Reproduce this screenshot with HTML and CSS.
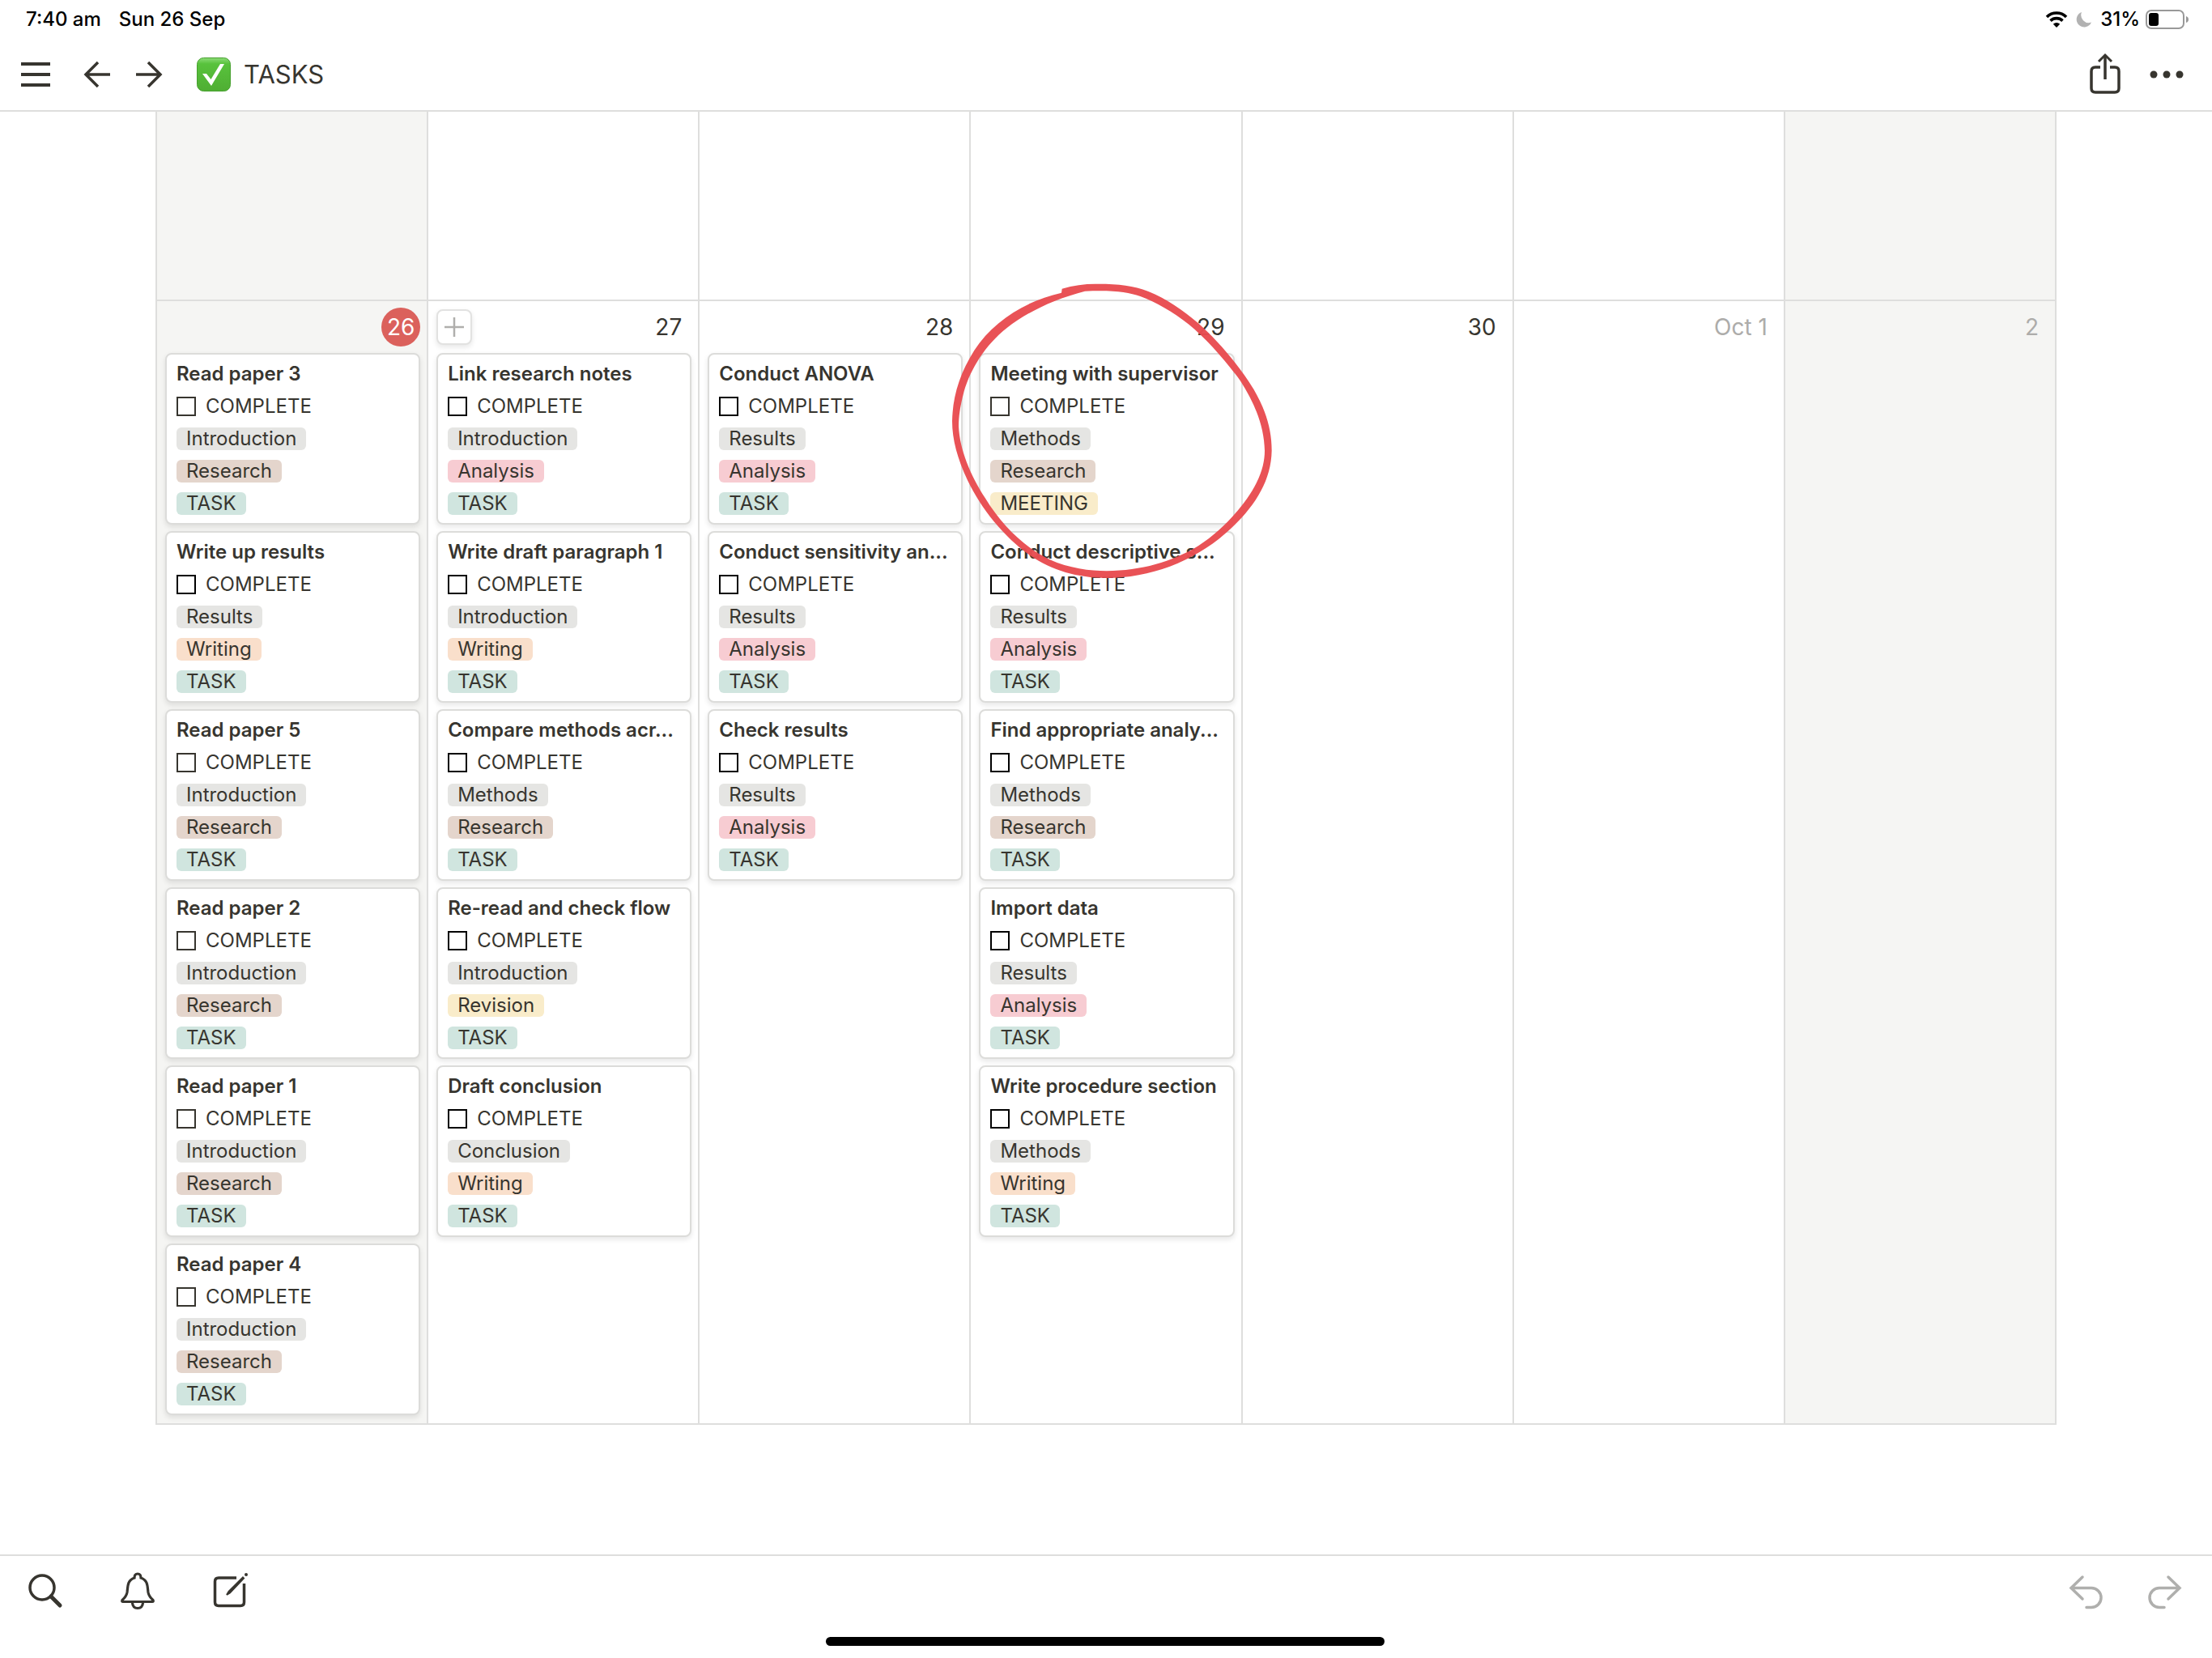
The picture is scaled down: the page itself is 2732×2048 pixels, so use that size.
FILE: index.html
```html
<!DOCTYPE html>
<html lang="en">
<head>
<meta charset="utf-8">
<title>Tasks</title>
<link rel="stylesheet" href="styles.css">
</head>
<body>
<div class="status">
  <span>7:40 am</span>
  <span>Sun 26 Sep</span>
  <div class="status-right">
    <svg width="28" height="20" viewBox="0 0 28 20"><path d="M2 7A17 17 0 0 1 26 7" fill="none" stroke="#000" stroke-width="3.6"/><path d="M6.5 11.6A11 11 0 0 1 21.500 11.600" fill="none" stroke="#000" stroke-width="3.600"/><path d="M14 20 9.800 15.800A6 6 0 0 1 18.200 15.800Z"/></svg>
    <svg class="moon" width="20" height="20" viewBox="0 0 20 20"><path d="M7 1A9.500 9.500 0 1 0 19 13.500 9.500 9.500 0 0 1 7 1Z" fill="#b2b2b2"/></svg>
    <span>31%</span>
    <svg class="battery" width="54" height="24" viewBox="0 0 54 24"><rect x="1" y="1" width="46" height="22" rx="6" fill="none" stroke="#999" stroke-width="2"/><rect x="4" y="4" width="12" height="16" rx="3"/><path d="M50 8Q53 9 53 12T50 16Z" fill="#999"/></svg>
  </div>
</div>
<header class="topbar">
  <button class="icon-btn menu" aria-label="Menu"><svg width="36" height="32" viewBox="0 0 36 32"><path d="M0 3H36M0 16H36M0 29H36" stroke-width="4"/></svg></button>
  <button class="icon-btn back" aria-label="Back"><svg width="32" height="32" viewBox="0 0 32 32"><path d="M32 16H2M17 1 2 16 17 31" stroke-width="3.500"/></svg></button>
  <button class="icon-btn forward" aria-label="Forward"><svg width="32" height="32" viewBox="0 0 32 32"><path d="M0 16H30M15 1 30 16 15 31" stroke-width="3.500"/></svg></button>
  <h1 class="page-title">
    <svg width="42" height="42" viewBox="0 0 42 42"><defs><linearGradient id="g" x1="0" y1="0" x2="0" y2="1"><stop offset="0" stop-color="#8ddc78"/><stop offset=".18" stop-color="#58c23c"/><stop offset="1" stop-color="#4fae33"/></linearGradient></defs><rect x=".5" y=".5" width="41" height="41" rx="8" fill="url(#g)" stroke="#47a02f"/><path d="M7 20H12L17.500 27 29 8H34L18 35Z" fill="#fff"/></svg>
    TASKS
  </h1>
  <button class="icon-btn share" aria-label="Share"><svg width="40" height="50" viewBox="0 0 40 50"><path d="M14 16H8Q3 16 3 21V42Q3 47 8 47H32Q37 47 37 42V21Q37 16 32 16H26M20 31V2" stroke-width="3.500"/><path d="M12 9 20 1 28 9" stroke-width="3"/></svg></button>
  <button class="icon-btn" aria-label="More"><svg width="42" height="10" viewBox="0 0 42 10"><g fill="#37352f"><circle cx="5" cy="5" r="4.500"/><circle cx="21" cy="5" r="4.500"/><circle cx="37" cy="5" r="4.500"/></g></svg></button>
</header>
<main class="content">
<div class="calendar">
  <div class="cell past weekend"></div><div class="cell past"></div><div class="cell past"></div><div class="cell past"></div><div class="cell past"></div><div class="cell past"></div><div class="cell past weekend"></div>

  <section class="cell weekend">
    <div class="day"><span class="date today">26</span></div>
    <article class="card"><h2>Read paper 3</h2><label class="check"><input type="checkbox">COMPLETE</label><p><span class="tag gray">Introduction</span></p><p><span class="tag brown">Research</span></p><p><span class="tag green">TASK</span></p></article>
    <article class="card"><h2>Write up results</h2><label class="check strong"><input type="checkbox">COMPLETE</label><p><span class="tag gray">Results</span></p><p><span class="tag orange">Writing</span></p><p><span class="tag green">TASK</span></p></article>
    <article class="card"><h2>Read paper 5</h2><label class="check"><input type="checkbox">COMPLETE</label><p><span class="tag gray">Introduction</span></p><p><span class="tag brown">Research</span></p><p><span class="tag green">TASK</span></p></article>
    <article class="card"><h2>Read paper 2</h2><label class="check"><input type="checkbox">COMPLETE</label><p><span class="tag gray">Introduction</span></p><p><span class="tag brown">Research</span></p><p><span class="tag green">TASK</span></p></article>
    <article class="card"><h2>Read paper 1</h2><label class="check"><input type="checkbox">COMPLETE</label><p><span class="tag gray">Introduction</span></p><p><span class="tag brown">Research</span></p><p><span class="tag green">TASK</span></p></article>
    <article class="card"><h2>Read paper 4</h2><label class="check"><input type="checkbox">COMPLETE</label><p><span class="tag gray">Introduction</span></p><p><span class="tag brown">Research</span></p><p><span class="tag green">TASK</span></p></article>
  </section>

  <section class="cell">
    <div class="day"><button class="add" aria-label="Add task"><svg width="24" height="24" viewBox="0 0 24 24"><path d="M0 12H24M12 0V24" stroke="#b0afad" stroke-width="2.500"/></svg></button><span class="date">27</span></div>
    <article class="card"><h2>Link research notes</h2><label class="check strong"><input type="checkbox">COMPLETE</label><p><span class="tag gray">Introduction</span></p><p><span class="tag red">Analysis</span></p><p><span class="tag green">TASK</span></p></article>
    <article class="card"><h2>Write draft paragraph 1</h2><label class="check strong"><input type="checkbox">COMPLETE</label><p><span class="tag gray">Introduction</span></p><p><span class="tag orange">Writing</span></p><p><span class="tag green">TASK</span></p></article>
    <article class="card"><h2>Compare methods acr...</h2><label class="check strong"><input type="checkbox">COMPLETE</label><p><span class="tag gray">Methods</span></p><p><span class="tag brown">Research</span></p><p><span class="tag green">TASK</span></p></article>
    <article class="card"><h2>Re-read and check flow</h2><label class="check strong"><input type="checkbox">COMPLETE</label><p><span class="tag gray">Introduction</span></p><p><span class="tag yellow">Revision</span></p><p><span class="tag green">TASK</span></p></article>
    <article class="card"><h2>Draft conclusion</h2><label class="check strong"><input type="checkbox">COMPLETE</label><p><span class="tag gray">Conclusion</span></p><p><span class="tag orange">Writing</span></p><p><span class="tag green">TASK</span></p></article>
  </section>

  <section class="cell">
    <div class="day"><span class="date">28</span></div>
    <article class="card"><h2>Conduct ANOVA</h2><label class="check strong"><input type="checkbox">COMPLETE</label><p><span class="tag gray">Results</span></p><p><span class="tag red">Analysis</span></p><p><span class="tag green">TASK</span></p></article>
    <article class="card"><h2>Conduct sensitivity an...</h2><label class="check strong"><input type="checkbox">COMPLETE</label><p><span class="tag gray">Results</span></p><p><span class="tag red">Analysis</span></p><p><span class="tag green">TASK</span></p></article>
    <article class="card"><h2>Check results</h2><label class="check strong"><input type="checkbox">COMPLETE</label><p><span class="tag gray">Results</span></p><p><span class="tag red">Analysis</span></p><p><span class="tag green">TASK</span></p></article>
  </section>

  <section class="cell">
    <div class="day"><span class="date">29</span></div>
    <article class="card"><h2>Meeting with supervisor</h2><label class="check"><input type="checkbox">COMPLETE</label><p><span class="tag gray">Methods</span></p><p><span class="tag brown">Research</span></p><p><span class="tag yellow">MEETING</span></p></article>
    <article class="card"><h2>Conduct descriptive s...</h2><label class="check strong"><input type="checkbox">COMPLETE</label><p><span class="tag gray">Results</span></p><p><span class="tag red">Analysis</span></p><p><span class="tag green">TASK</span></p></article>
    <article class="card"><h2>Find appropriate analy...</h2><label class="check strong"><input type="checkbox">COMPLETE</label><p><span class="tag gray">Methods</span></p><p><span class="tag brown">Research</span></p><p><span class="tag green">TASK</span></p></article>
    <article class="card"><h2>Import data</h2><label class="check strong"><input type="checkbox">COMPLETE</label><p><span class="tag gray">Results</span></p><p><span class="tag red">Analysis</span></p><p><span class="tag green">TASK</span></p></article>
    <article class="card"><h2>Write procedure section</h2><label class="check strong"><input type="checkbox">COMPLETE</label><p><span class="tag gray">Methods</span></p><p><span class="tag orange">Writing</span></p><p><span class="tag green">TASK</span></p></article>
    <svg class="ink" width="440" height="400" viewBox="0 0 1320 1200"><path fill="#e84c51" fill-opacity=".97" fill-rule="evenodd" d="M455 80C500 66 545 61 590 62C665 62 720 68 775 90C840 116 905 160 960 208C1030 270 1110 362 1165 452C1210 530 1232 600 1232 680C1230 800 1160 900 1060 987C940 1092 780 1152 620 1152C510 1150 420 1125 335 1067C240 1000 155 895 105 790C68 710 48 640 48 570C50 480 75 395 130 308C200 200 320 125 453 95ZM540 89C420 120 320 170 250 226C170 290 118 375 92 460C78 515 72 550 72 590C76 675 115 770 170 855C235 962 320 1040 410 1084C480 1116 560 1126 620 1126C750 1124 860 1094 960 1033C1060 968 1140 870 1175 800C1198 755 1206 715 1206 680C1204 590 1170 505 1115 420C1060 345 990 265 925 212C865 165 800 128 745 108C700 92 640 84 540 89Z"/></svg>
  </section>

  <section class="cell"><div class="day"><span class="date">30</span></div></section>
  <section class="cell"><div class="day"><span class="date muted">Oct 1</span></div></section>
  <section class="cell weekend"><div class="day"><span class="date muted">2</span></div></section>
</div>
</main>
<footer class="toolbar">
  <nav class="tools">
    <button class="icon-btn" aria-label="Search"><svg width="42" height="44" viewBox="0 0 42 44"><circle cx="17" cy="18" r="15" stroke-width="3.500"/><path d="M28 29 39 40" stroke-width="5" stroke-linecap="round"/></svg></button>
    <button class="icon-btn bell" aria-label="Notifications"><svg width="42" height="46" viewBox="0 0 42 46"><path d="M3 36.500Q1 36.500 2 34.500Q7 30 8 25C9 18 8 10 17 7Q17 2 21 2T25 7C34 10 33 18 34 25Q35 30 40 34.500Q41 36.500 39 36.500ZM14.500 38Q15 44.500 21 44.500T27.500 38" stroke-width="3.200"/></svg></button>
    <button class="icon-btn compose" aria-label="New page"><svg width="44" height="46" viewBox="0 0 44 46"><path d="M29 7H7Q2.500 7 2.500 11.500V37Q2.500 41.500 7 41.500H34Q38.500 41.500 38.500 37V14" stroke-width="3.500"/><path d="M17 28 19.500 24 37 6.500 38 7.500 21 25.500Z" fill="#37352f" stroke-width="2"/><circle cx="41" cy="3" r="2" fill="#37352f" stroke="none"/></svg></button>
  </nav>
  <nav class="history">
    <button class="icon-btn" aria-label="Undo" disabled><svg width="42" height="42" viewBox="0 0 42 42"><path d="M16 2 2 15.500 16 29M2 15.500H27A12 12 0 0 1 27 39.500H21" stroke-width="3.500" stroke-linecap="round"/></svg></button>
    <button class="icon-btn" aria-label="Redo" disabled><svg width="42" height="42" viewBox="0 0 42 42"><path d="M26 2 40 15.500 26 29M40 15.500H15A12 12 0 0 0 15 39.500H21" stroke-width="3.500" stroke-linecap="round"/></svg></button>
  </nav>
  <div class="home"></div>
</footer>
</body>
</html>
```
FILE: styles.css
```css
* { box-sizing: border-box; }

body {
  margin: 0;
  min-height: 100vh;
  display: flex;
  flex-direction: column;
  background: #fff;
  color: #37352f;
  font-family: Inter, "Liberation Sans", sans-serif;
  font-size: 24px;
  line-height: 40px;
}

h1, h2, p { margin: 0; }
svg { display: block; }

.status {
  height: 48px;
  padding: 0 28px 0 32px;
  display: flex;
  align-items: center;
  gap: 22px;
  color: #000;
  font-weight: 500;
}
.status-right {
  margin-left: auto;
  display: flex;
  align-items: center;
  gap: 7px;
}
.moon { margin: 0 3px; }

.topbar {
  height: 90px;
  padding: 0 35px 0 26px;
  display: flex;
  align-items: center;
  border-bottom: 2px solid #dededd;
}
.icon-btn {
  padding: 0;
  border: 0;
  background: none;
  color: #37352f;
}
.icon-btn:disabled { color: #afafad; }
.icon-btn svg { fill: none; stroke: currentColor; overflow: visible; }
.topbar circle { stroke: none; }
.back { margin-left: 42px; }
.forward { margin-left: 32px; }
.page-title {
  margin-left: 43px;
  display: flex;
  align-items: center;
  gap: 16px;
  font-size: 31px;
  font-weight: 400;
}
.page-title svg { flex: none; }
.share { margin-left: auto; margin-right: 35px; }

.content {
  flex: 1;
  padding: 0 192px 160px;
}
.calendar {
  display: grid;
  grid-template-columns: repeat(7, 1fr);
  border-left: 2px solid #dededd;
}
.cell {
  position: relative;
  min-width: 0;
  padding: 0 8px 10px 10px;
  display: flex;
  flex-direction: column;
  gap: 8px;
  border-right: 2px solid #dededd;
  border-bottom: 2px solid #dededd;
}
.past { height: 234px; }
.weekend { background: #f5f5f3; }

.day {
  height: 56px;
  padding-top: 8px;
  display: flex;
  align-items: center;
}
.date {
  margin-left: auto;
  padding-right: 12px;
  font-size: 28px;
}
.today {
  width: 48px;
  height: 48px;
  padding: 0;
  border-radius: 50%;
  background: #db615c;
  color: #fff;
  line-height: 48px;
  text-align: center;
}
.muted { color: #adacaa; }
.add {
  width: 44px;
  height: 44px;
  padding: 8px;
  border: 2px solid #e2e2e1;
  border-radius: 8px;
  background: #fff;
  box-shadow: 0 3px 6px rgba(15, 15, 15, .1);
}

.card {
  padding: 4px 12px;
  border: 2px solid #dcdcda;
  border-radius: 8px;
  background: #fff;
  box-shadow: 0 3px 6px rgba(15, 15, 15, .1);
}
.card h2 {
  overflow: hidden;
  font-size: 24px;
  font-weight: 600;
  white-space: nowrap;
}
.card p {
  height: 40px;
  display: flex;
  align-items: center;
}
.check {
  display: flex;
  align-items: center;
  gap: 12px;
}
.check input {
  appearance: none;
  width: 24px;
  height: 24px;
  margin: 0;
  border: 2px solid #37352f;
}
.strong input { border-color: #000; }
.tag {
  padding: 0 12px;
  border-radius: 6px;
  line-height: 28px;
}
.gray { background: #e5e5e3; }
.brown { background: #e4d5cc; }
.green { background: #d0e5df; }
.red { background: #f7ccd2; }
.orange { background: #f9dfcb; }
.yellow { background: #f9ecca; }

.ink {
  position: absolute;
  left: -39px;
  top: -42px;
  z-index: 1;
  pointer-events: none;
}

.toolbar {
  height: 128px;
  padding: 20px 38px 15px 35px;
  display: grid;
  grid-template-columns: auto 1fr;
  align-content: space-between;
  border-top: 2px solid #dededd;
}
.tools, .history { display: flex; align-items: center; }
.bell { margin-left: 72px; }
.compose { margin-left: 72px; }
.history { justify-self: end; padding-top: 4px; gap: 54px; }
.home {
  grid-column: 1 / -1;
  justify-self: center;
  width: 690px;
  height: 11px;
  border-radius: 6px;
  background: #000;
}
```
